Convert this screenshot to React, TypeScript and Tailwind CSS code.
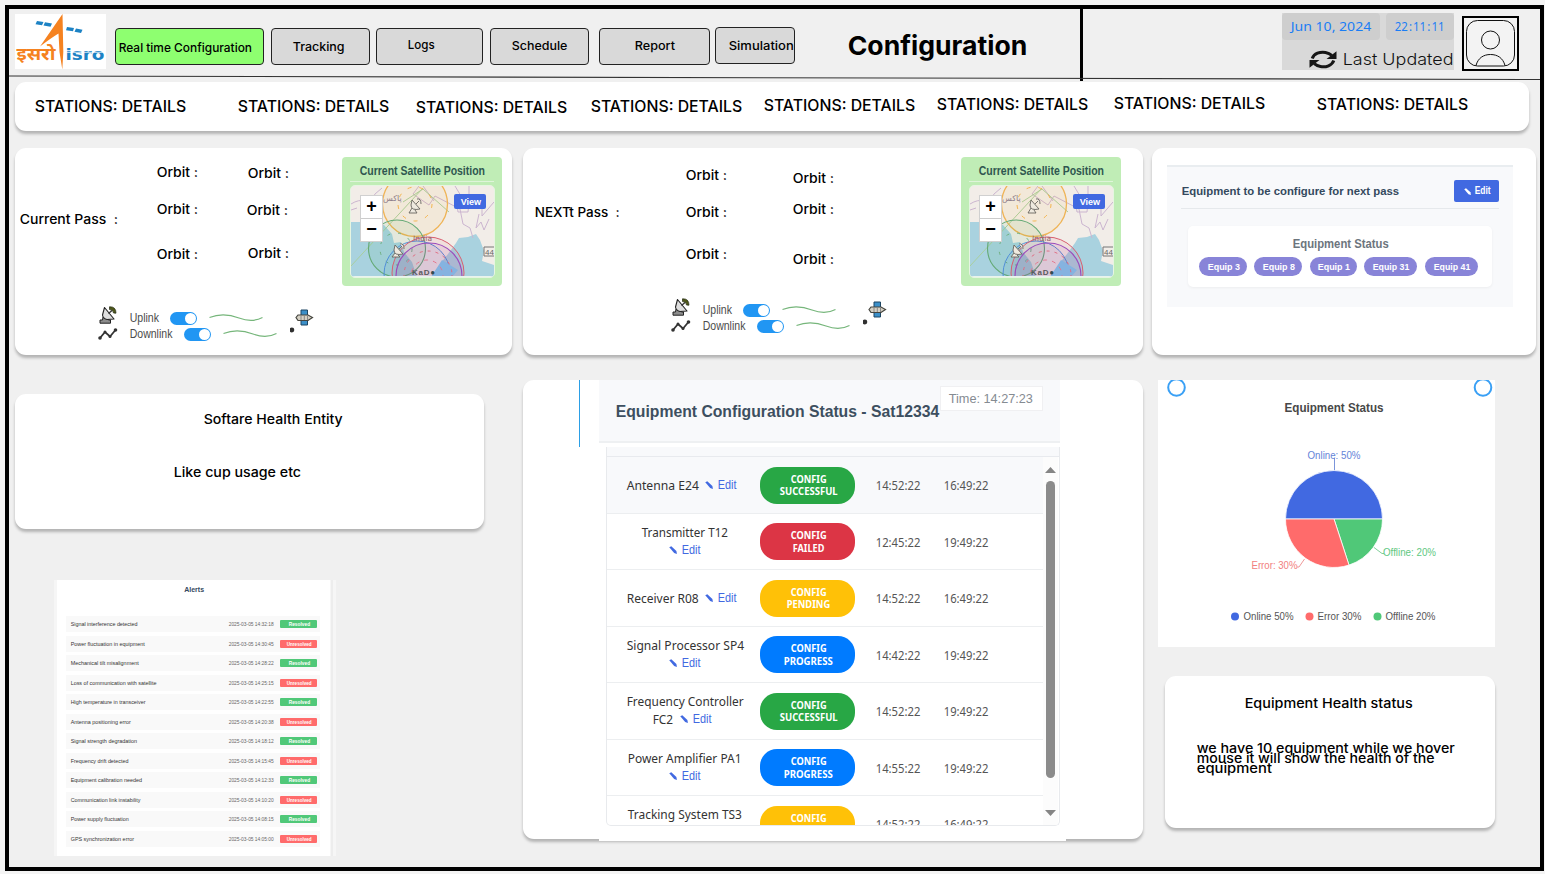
import React, { useLayoutEffect, useRef, useState } from "react";

/* A single line of text stretched to the width of its box. */
function Fit({ className, children }: { className: string; children: React.ReactNode }) {
  const outer = useRef<HTMLSpanElement>(null);
  const inner = useRef<HTMLSpanElement>(null);
  const [scale, setScale] = useState(1);
  useLayoutEffect(() => {
    if (outer.current && inner.current) {
      setScale(outer.current.clientWidth / inner.current.offsetWidth);
    }
  }, []);
  return (
    <span ref={outer} className={`block shrink-0 whitespace-pre ${className}`}>
      <span ref={inner} className="inline-block origin-left" style={{ transform: `translateX(0.7px) scaleX(${scale})` }}>
        {children}
      </span>
    </span>
  );
}

const card = "rounded-[11px] bg-white shadow-[0_3px_3px_rgba(0,0,0,0.25)]";
const arial = "font-['Liberation_Sans',sans-serif]";
const noto = "font-['Noto_Sans',sans-serif]";

function Logo() {
  return (
    <svg className="mt-[5px] ml-[6px] h-[55px] w-[91px] shrink-0 bg-white" viewBox="0 0 91 55">
      <path d="M47.500 0 L25 32.500 Q36 24 43.500 19.500 L44.500 38 L47.300 55.500 L48.300 38 Z" fill="#f58220" />
      <g fill="#1c82c4">
        <path d="M22 7l6.500 1 -1.500 3.200 -6.500 -1z M30 8.300l7 1.200 -1.500 3.200 -7 -1.200z M52 13l7 1 -1 3.200 -7 -1z M61 14.500l6.500 1.200 -1.500 3.200 -6.500 -1.200z" />
      </g>
      <text x="1.500" y="46" fontSize="17" fontWeight="700" fill="#f58220" textLength="39" lengthAdjust="spacingAndGlyphs" fontFamily="Noto Sans Devanagari, Noto Sans, Lohit Devanagari, sans-serif">इसरो</text>
      <text x="50.500" y="45.500" fontSize="15" fontWeight="700" fill="#1c82c4" textLength="39" lengthAdjust="spacingAndGlyphs" fontFamily="DejaVu Sans, sans-serif">isro</text>
      <path d="M50 38.300h40" stroke="#fff" strokeWidth=".8" />
    </svg>
  );
}

function NavButton({ box, text, children }: { box: string; text: string; children: string }) {
  return (
    <button className={`flex shrink-0 items-start rounded-[4px] border border-[#222] text-[12px] leading-[18px] font-medium ${box}`}>
      <Fit className={text}>{children}</Fit>
    </button>
  );
}

function Header() {
  return (
    <header className="relative flex h-[73px] items-start">
      <Logo />
      <NavButton box="ml-[9px] mt-[19px] h-[37px] w-[149px] bg-[#8eff70]" text="ml-[2px] mt-[9.500px] w-[133px]">Real time Configuration</NavButton>
      <NavButton box="ml-[7px] mt-[19px] h-[37px] w-[99px] bg-[#d9d9d9]" text="ml-[19px] mt-[8.500px] w-[52px]">Tracking</NavButton>
      <NavButton box="ml-[6px] mt-[19px] h-[37px] w-[107px] bg-[#d9d9d9]" text="ml-[29.500px] mt-[6.500px] w-[27px]">Logs</NavButton>
      <NavButton box="ml-[7px] mt-[19px] h-[37px] w-[99px] bg-[#d9d9d9]" text="ml-[19px] mt-[7.500px] w-[56px]">Schedule</NavButton>
      <NavButton box="ml-[10px] mt-[19px] h-[37px] w-[111px] bg-[#d9d9d9]" text="ml-[33px] mt-[7.500px] w-[40px]">Report</NavButton>
      <NavButton box="ml-[5px] mt-[18px] h-[37px] w-[80px] bg-[#d9d9d9]" text="ml-[10px] mt-[8.500px] w-[65px]">Simulation</NavButton>
      <h1 className="mt-[19px] ml-[52px]">
        <Fit className="w-[180px] text-[26px] leading-[36px] font-bold">Configuration</Fit>
      </h1>
      <div className="ml-[53px] h-[72px] w-[3px] shrink-0 bg-black" />
      <div className="mt-[4px] ml-[199px] h-[57px] w-[172px] shrink-0 bg-[#d9d9d9]">
        <div className={`flex justify-between text-[13px] leading-[27px] text-[#1a7df5] ${noto}`}>
          <div className="w-[98px] rounded-[4px] bg-[#cecece] pl-[8px]">
            <Fit className="w-[80px]">Jun 10, 2024</Fit>
          </div>
          <div className="w-[68px] rounded-[4px] bg-[#cecece] pl-[8px]">
            <Fit className="w-[50px]">{"22\u200a:\u200a11\u200a:\u200a11"}</Fit>
          </div>
        </div>
        <div className="mt-[7px] flex h-[24px] items-center pl-[27px]">
          <svg className="h-[19px] w-[28px]" viewBox="0 0 28 19" fill="none" stroke="#161616" strokeWidth="3">
            <path d="M3.200 8.500C5 3.600 11 1.400 16.500 2.400C19.300 2.900 21.200 3.900 22.800 5.300" />
            <path d="M24.800 10.500C23 15.400 17 17.600 11.500 16.600C8.700 16.100 6.800 15.100 5.200 13.700" />
            <path d="M27.500 1.200V9H17.500z M.5 17.800V10H10.500z" fill="#161616" stroke="none" />
          </svg>
          <Fit className="ml-[5px] w-[111px] text-[16.500px] leading-[24px] font-light text-[#111]">Last Updated</Fit>
        </div>
      </div>
      <svg className="mt-[7px] ml-[8px] h-[55px] w-[57px] shrink-0 bg-[#f3f3f3]" viewBox="0 0 57 55" fill="none" stroke="#111">
        <rect x="1" y="1" width="55" height="53" strokeWidth="2" stroke="#000" />
        <rect x="4.500" y="4.500" width="48" height="45.500" rx="11" />
        <circle cx="28.500" cy="24" r="9" />
        <path d="M14 49.500C16 42 21.500 38.500 28.500 38.500S41 42 43 49.500" />
      </svg>
      <svg className="absolute top-[66px] left-0 h-[6px] w-[1531px]" viewBox="0 0 1531 6">
        <path d="M0 1L1531 4.500" stroke="#333" strokeWidth="1.100" />
      </svg>
    </header>
  );
}

const stations = [
  "ml-[19px] mt-[14px]",
  "ml-[51px] mt-[14px]",
  "ml-[26px] mt-[15px]",
  "ml-[23px] mt-[14px]",
  "ml-[21px] mt-[13px]",
  "ml-[21px] mt-[12px]",
  "ml-[25px] mt-[11px]",
  "ml-[51px] mt-[12px]",
];

function SatelliteMap() {
  return (
    <div className={`h-[129px] w-[160px] shrink-0 rounded-[4px] bg-[#c0edb6] px-[8px] ${arial}`}>
      <div className="flex h-[25px] border-b border-[#dff5da] pl-[9px]">
        <Fit className="mt-[5px] w-[125px] text-[12px] leading-[18px] font-bold text-[#2f5750]">Current Satellite Position</Fit>
      </div>
      <div className="relative mt-[3px] h-[93px] w-[145px] overflow-hidden rounded-[5px] border border-[#e6f5e2] bg-[#f2ede8]">
        <svg className="h-[91px] w-[143px]" viewBox="0 0 143 91" fill="none">
          <path d="M0 36H9L33 39L41 48L43 57L50 56L53 66L61 76L66 91H0z" fill="#a9d2df" />
          <path d="M80 91L89 78L97 68L105 57L108 52L117 51L125 48L129 54L133 65L131 75L143 79V91z" fill="#a9d2df" />
          <path d="M0 18Q8 13 14 15T24 8L31 2M0 24L6 22M68 0L62 8L78 19L84 10L109 23L112 38L119 42L122 52M105 15L118 16L117 26H107L105 12M118 0V10L131 15V30L143 16M104 0L110 10M128 28L125 42L130 36L133 44L138 33M72 0L83 15" stroke="#cbb5cf" />
          <path d="M0 80L72 2M52 16L72 3L98 26" stroke="#a9cf9e" />
          <circle cx="64" cy="18" r="32.500" fill="#ffa50010" stroke="#efb457" strokeWidth="1.300" />
          <circle cx="64" cy="18" r="17" stroke="#f3b44e" strokeDasharray="4 8" />
          <circle cx="46" cy="62.500" r="28.500" fill="#28a74512" stroke="#65aa76" strokeWidth="1.100" />
          <circle cx="45" cy="63" r="16" stroke="#6fb080" strokeDasharray="3 8" />
          <circle cx="66" cy="88" r="33" fill="#2080e010" stroke="#528fd8" />
          <circle cx="77" cy="87" r="36" fill="#e0304012" stroke="#d85f70" />
          <circle cx="78" cy="90" r="33" fill="#a030b018" stroke="#9b4bbc" strokeWidth="1.200" />
          <path d="M91 74L80 91H101L107 84Z" fill="#85b3e0" />
          <circle cx="77" cy="89" r="24" stroke="#df6e83" strokeDasharray="3 5" />
          <circle cx="76" cy="90" r="16" stroke="#e37990" strokeDasharray="4 5" />
          <g stroke="#68645f" strokeWidth=".9" fill="#eee9df">
            <path d="M61 14L69 23Q60 25 60 19ZM61 22L58 27H66L64 24" />
            <path d="M66 13Q70 12 70 18M65 18L68 15" />
            <path d="M44 59L52 68Q43 70 43 64ZM44 67L41 71H49L47 69M49 58Q53 57 53 63M48 63L51 60" />
          </g>
          <text x="32" y="15" fontSize="8" fill="#8d7d8b" fontFamily="DejaVu Sans">پاکس</text>
          <text x="62" y="55" fontSize="7.500" fill="#90606d" textLength="19" fontFamily="DejaVu Sans">India</text>
          <text x="61" y="89" fontSize="8" fontWeight="700" fill="#59595d" textLength="23" fontFamily="Liberation Sans">KaD<tspan fill="#344c51">●</tspan></text>
          <path d="M143 61H133V70H143" stroke="#777" />
          <text x="134" y="69" fontSize="8" fill="#666" fontFamily="Liberation Sans">44</text>
          <path d="M0 90.500H143" stroke="#e9f3ee" />
        </svg>
        <div className="absolute top-[9px] left-[9px] w-[23px] border border-[#d0d0d0] bg-white text-center text-[18px] font-bold text-black">
          <div className="h-[23px] border-b border-[#ccc] leading-[21px]">+</div>
          <div className="h-[22px] leading-[21px]">−</div>
        </div>
        <div className="absolute top-[8px] left-[103px] flex h-[15px] w-[32px] justify-center rounded-[2px] bg-[#4169e1] text-white">
          <Fit className="w-[20px] text-[9px] leading-[16px] font-bold">View</Fit>
        </div>
      </div>
    </div>
  );
}

function Dish() {
  return (
    <svg className="h-[18px] w-[18px]" viewBox="0 0 18 18">
      <path d="M4 11L3.500 14H1V17.200H11.500V14H9.500L9 11" fill="#8d8d8d" stroke="#222" />
      <path d="M5.500 1.500L3.500 9Q4 12.500 8 13.500L15 13Z" fill="#dedede" stroke="#222" strokeWidth="1.100" strokeLinejoin="round" />
      <path d="M9.500 7.500L13 4.500" stroke="#333" strokeWidth="1.200" />
      <path d="M10.500 .8Q17 .5 17 7.200L14.500 7Q14.500 3.500 10.500 3.500Z" fill="#4e581a" stroke="#202510" strokeWidth=".7" />
    </svg>
  );
}

function Toggle() {
  return (
    <span className="flex h-[13px] w-[27px] shrink-0 items-center justify-end rounded-full bg-[#2196f3] pr-[1px]">
      <span className="h-[11px] w-[11px] rounded-full bg-white" />
    </span>
  );
}

function Wave() {
  return (
    <svg className="h-[8px] w-[54px] shrink-0" viewBox="0 0 54 8" fill="none">
      <path d="M.5 3.500C12 -1 22 1 30 4S45 8 53.500 3.500" stroke="#76b67b" strokeWidth="1.100" />
    </svg>
  );
}

function Links() {
  return (
    <div className={`flex w-[220px] text-[12px] leading-[16px] text-[#4c4c4c] ${arial}`}>
      <div className="w-[31px] shrink-0">
        <div className="pl-[1px]"><Dish /></div>
        <svg className="mt-[4px] h-[12px] w-[20px]" viewBox="0 0 20 12" fill="none" stroke="#333" strokeWidth="1.800">
          <path d="M2 10L7 4L12 8.500L17.500 2" />
          <g fill="#333" stroke="none"><circle cx="2" cy="10" r="1.800" /><circle cx="7" cy="4" r="1.500" /><circle cx="12" cy="8.500" r="1.500" /><circle cx="17.500" cy="2" r="1.800" /></g>
        </svg>
      </div>
      <div className="w-[137px] shrink-0 pt-[4px]">
        <div className="flex h-[16px] items-center">
          <Fit className="w-[29px]">Uplink</Fit>
          <span className="w-[12px] shrink-0" />
          <Toggle />
          <span className="w-[12px] shrink-0" />
          <Wave />
        </div>
        <div className="flex h-[16px] items-center">
          <Fit className="w-[43px]">Downlink</Fit>
          <span className="w-[12px] shrink-0" />
          <Toggle />
          <span className="w-[12px] shrink-0" />
          <Wave />
        </div>
      </div>
      <svg className="mt-[2px] ml-[24px] h-[28px] w-[26px] shrink-0" viewBox="0 0 26 28">
        <path d="M11 2H17.500V17H11Z" fill="#3b8fc8" stroke="#1d4562" />
        <path d="M6 9.500L8 7H18L22.500 9.500L18 12.500H8Z" fill="#d5d0c3" stroke="#44443e" strokeWidth="1.200" />
        <path d="M11 7.500V12M14.300 7.500V12M17.500 7.500V12" stroke="#888" />
        <circle cx="1.900" cy="22" r="2.400" fill="#303030" />
      </svg>
    </div>
  );
}

function PencilIcon({ className }: { className: string }) {
  return (
    <svg className={`inline-block shrink-0 ${className}`} viewBox="0 0 9 9" fill="currentColor">
      <path d="M.3 1.500L2.600 .2L8.300 5.500L8.900 8.900L5.800 8Z" />
    </svg>
  );
}

function Orbits({ box, tops }: { box: string; tops: string[] }) {
  return (
    <div className={`w-[42px] shrink-0 text-[13px] leading-[18px] font-medium ${box}`}>
      {tops.map((t, i) => (
        <Fit key={i} className={`w-[41px] ${t}`}>Orbit :</Fit>
      ))}
    </div>
  );
}

function CurrentPass() {
  return (
    <section className={`h-[207px] w-[497px] shrink-0 ${card}`}>
      <div className="flex h-[155px] items-start">
        <Fit className="mt-[62px] ml-[4px] w-[98px] text-[13px] leading-[18px] font-medium">Current Pass  :</Fit>
        <Orbits box="ml-[39px]" tops={["mt-[15px]", "mt-[19px]", "mt-[27px]"]} />
        <Orbits box="ml-[48.500px]" tops={["mt-[16px]", "mt-[19px] -ml-[1px]", "mt-[25px]"]} />
        <div className="mt-[9px] ml-[53.500px]"><SatelliteMap /></div>
      </div>
      <div className="ml-[83px] pt-[3px]"><Links /></div>
    </section>
  );
}

function NextPass() {
  return (
    <section className={`h-[207px] w-[620px] shrink-0 ${card}`}>
      <div className="flex h-[147px] items-start">
        <Fit className="mt-[55px] ml-[11px] w-[85px] text-[13px] leading-[18px] font-medium">NEXTt Pass  :</Fit>
        <Orbits box="ml-[66px]" tops={["mt-[18px]", "mt-[19px]", "mt-[24px]"]} />
        <Orbits box="ml-[65px]" tops={["mt-[21px]", "mt-[13px]", "mt-[32px]"]} />
        <div className="mt-[9px] ml-[127px]"><SatelliteMap /></div>
      </div>
      <div className="ml-[148px] pt-[3px]"><Links /></div>
    </section>
  );
}

const equips = [
  { label: "Equip 3", box: "w-[48px]", text: "w-[32px]" },
  { label: "Equip 8", box: "w-[48px]", text: "w-[32px]" },
  { label: "Equip 1", box: "w-[47px]", text: "w-[32px]" },
  { label: "Equip 31", box: "w-[53px]", text: "w-[37px]" },
  { label: "Equip 41", box: "w-[53px]", text: "w-[37px]" },
];

function NextEquipment() {
  return (
    <section className={`h-[207px] w-[384px] shrink-0 pt-[17px] pl-[15px] ${card} ${arial}`}>
      <div className="h-[142px] w-[346px] border-t-2 border-[#e9edf0] bg-[#f8f9fb] px-[14px]">
        <div className="flex h-[42px] items-start justify-between border-b border-[#e6e9ec]">
          <Fit className="mt-[15px] w-[217px] text-[11.500px] leading-[18px] font-bold text-[#34495e]">Equipment to be configure for next pass</Fit>
          <button className="mt-[13px] flex h-[22px] w-[45px] items-center justify-center rounded-[2px] bg-[#4169e1] pl-[1px] text-white">
            <PencilIcon className="mr-[3px] h-[7px] w-[7px]" />
            <Fit className="w-[16px] text-[10px] leading-[22px] font-bold">Edit</Fit>
          </button>
        </div>
        <div className="mt-[17px] ml-[7px] flex h-[61px] w-[304px] flex-col items-center rounded-[5px] bg-white pt-[9px] shadow-[0_1px_3px_rgba(0,0,0,0.05)]">
          <Fit className="w-[96px] text-[12px] leading-[18px] font-bold text-[#6c757d]">Equipment Status</Fit>
          <div className="mt-[4px] mr-[4px] flex gap-[7.500px]">
            {equips.map((e) => (
              <span key={e.label} className={`flex h-[19px] justify-center rounded-full bg-[#8884d8] text-[9.500px] leading-[19px] font-bold text-white ${e.box}`}>
                <Fit className={e.text}>{e.label}</Fit>
              </span>
            ))}
          </div>
        </div>
      </div>
    </section>
  );
}

type Alert = { text: string; width: string; time: string; ok: boolean };
const alerts: Alert[] = [
  { text: "Signal interference detected", width: "w-[67px]", time: "14:32:18", ok: true },
  { text: "Power fluctuation in equipment", width: "w-[74px]", time: "14:30:45", ok: false },
  { text: "Mechanical tilt misalignment", width: "w-[68px]", time: "14:28:22", ok: true },
  { text: "Loss of communication with satellite", width: "w-[86px]", time: "14:25:15", ok: false },
  { text: "High temperature in transceiver", width: "w-[75px]", time: "14:22:55", ok: true },
  { text: "Antenna positioning error", width: "w-[60px]", time: "14:20:38", ok: false },
  { text: "Signal strength degradation", width: "w-[66px]", time: "14:18:12", ok: true },
  { text: "Frequency drift detected", width: "w-[58px]", time: "14:15:45", ok: false },
  { text: "Equipment calibration needed", width: "w-[71px]", time: "14:12:33", ok: true },
  { text: "Communication link instability", width: "w-[70px]", time: "14:10:20", ok: false },
  { text: "Power supply fluctuation", width: "w-[58px]", time: "14:08:15", ok: true },
  { text: "GPS synchronization error", width: "w-[63px]", time: "14:05:00", ok: false },
];

function Alerts() {
  return (
    <section className={`mt-[51px] ml-[39px] flex h-[276px] w-[282px] bg-[#f6f6f6] pl-[3px] ${arial}`}>
      <div className="h-[276px] w-[273px] shrink-0 bg-white">
        <div className="flex h-[34px] justify-center pt-[4px]">
          <Fit className="w-[20px] text-[7px] leading-[12px] font-bold text-[#34495e]">Alerts</Fit>
        </div>
        {alerts.map((a) => (
          <div key={a.text} className="flex h-[19.560px] flex-col pl-[9px]">
            <div className="mt-[2px] flex h-[16px] w-[254px] items-center bg-[#f9f9f9] pl-[4px]">
              <div className="w-[158px] shrink-0">
                <Fit className={`text-[6px] leading-[14px] text-[#333] ${a.width}`}>{a.text}</Fit>
              </div>
              <Fit className="w-[45px] text-[5.500px] leading-[14px] text-[#666]">{`2025-03-05 ${a.time}`}</Fit>
              <span className={`ml-[7px] flex h-[8px] w-[37px] shrink-0 justify-center rounded-[1px] text-[5.500px] leading-[8px] font-bold text-white ${a.ok ? "bg-[#50c878]" : "bg-[#ff6b6b]"}`}>
                <Fit className={a.ok ? "w-[21px]" : "w-[25px]"}>{a.ok ? "Resolved" : "Unresolved"}</Fit>
              </span>
            </div>
          </div>
        ))}
      </div>
      <div className="ml-[1px] w-[2px] bg-[#ededed]" />
    </section>
  );
}

const Edit = () => (
  <span className={`flex items-center text-[#4169e1] ${arial}`}>
    <PencilIcon className="mr-[4px] h-[8px] w-[8px]" />
    <Fit className="w-[19px] text-[12px] leading-[18px]">Edit</Fit>
  </span>
);

const green = "bg-[#28a745]";
const red = "bg-[#dc3545]";
const yellow = "bg-[#ffc107]";
const blue = "bg-[#007bff]";

const rows = [
  { name: "Antenna E24", w: "w-[72px]", inline: true, status: "SUCCESSFUL", sw: "w-[58px]", color: green, a: "14:52:22", b: "16:49:22", box: "h-[57px] bg-[#f8f9fb]" },
  { name: "Transmitter T12", w: "w-[86px]", status: "FAILED", sw: "w-[32px]", color: red, a: "12:45:22", b: "19:49:22", box: "h-[56px]" },
  { name: "Receiver R08", w: "w-[72px]", inline: true, status: "PENDING", sw: "w-[44px]", color: yellow, a: "14:52:22", b: "16:49:22", box: "h-[57px]" },
  { name: "Signal Processor SP4", w: "w-[117px]", status: "PROGRESS", sw: "w-[49px]", color: blue, a: "14:42:22", b: "19:49:22", box: "h-[56px]" },
  { name: "Frequency Controller", w: "w-[117px]", second: "FC2", status: "SUCCESSFUL", sw: "w-[58px]", color: green, a: "14:52:22", b: "19:49:22", box: "h-[57px]" },
  { name: "Power Amplifier PA1", w: "w-[114px]", status: "PROGRESS", sw: "w-[49px]", color: blue, a: "14:55:22", b: "19:49:22", box: "h-[56px]" },
  { name: "Tracking System TS3", w: "w-[114px]", status: "PENDING", sw: "w-[44px]", color: yellow, a: "14:52:22", b: "16:49:22", box: "h-[57px]" },
];

function ConfigTable() {
  return (
    <section className={`flex h-[459px] w-[620px] shrink-0 ${card}`}>
      <div className="ml-[56px] h-[67px] w-px bg-[#2b9fe6]" />
      <div className="ml-[19px] h-[461px] w-[467px] shrink-0 bg-white">
        <div className={`flex h-[63px] w-[461px] items-start border-b-2 border-[#eef0f2] bg-[#f8f9fb] ${arial}`}>
          <Fit className="mt-[19.500px] ml-[16px] w-[324px] text-[17px] leading-[24px] font-bold text-[#3d4f60]">Equipment Configuration Status - Sat12334</Fit>
          <div className="mt-[6px] ml-[1px] flex h-[25px] w-[103px] justify-center border border-[#f0f0f2] bg-white">
            <Fit className="mr-[3px] w-[84px] text-[13px] leading-[23px] text-[#858b92]">Time: 14:27:23</Fit>
          </div>
        </div>
        <div className={`mt-[4px] ml-[7px] flex h-[379px] w-[454px] overflow-hidden rounded-b-[5px] border border-t-0 border-[#e8eaed] ${noto}`}>
          <div className="w-[436px] shrink-0">
            <div className="h-[10px] w-[452px] border-b border-[#e8eaee] bg-[#f8f9fb]" />
            {rows.map((r) => (
              <div key={r.name} className={`flex items-center border-b border-[#eceef0] text-[14px] text-[#333] ${r.box}`}>
                <div className="flex w-[153px] shrink-0 flex-col items-center pl-[1px]">
                  {r.inline ? (
                    <div className="mr-[7px] flex items-center gap-[7px]">
                      <Fit className={`text-[13px] leading-[18px] ${r.w}`}>{r.name}</Fit>
                      <Edit />
                    </div>
                  ) : (
                    <>
                      <Fit className={`-mt-[2px] text-[13px] leading-[18px] ${r.w}`}>{r.name}</Fit>
                      <div className={`flex items-center gap-[8px] ${r.second ? "mr-[5px]" : ""}`}>
                        {r.second && <Fit className="w-[20px] text-[13px] leading-[18px]">{r.second}</Fit>}
                        <Edit />
                      </div>
                    </>
                  )}
                </div>
                <div className={`flex h-[37px] w-[95px] shrink-0 flex-col items-center rounded-[17px] pt-[6px] text-[10px] leading-[12.500px] font-bold text-white ${r.color}`}>
                  <Fit className="w-[36px]">CONFIG</Fit>
                  <Fit className={r.sw}>{r.status}</Fit>
                </div>
                <Fit className="ml-[19.500px] w-[45px] text-[13px] leading-[18px] text-[#555]">{r.a}</Fit>
                <Fit className="ml-[23px] w-[45px] text-[13px] leading-[18px] text-[#555]">{r.b}</Fit>
              </div>
            ))}
          </div>
          <div className="mt-[10px] flex w-[15px] flex-col items-center bg-[#fcfcfc] pt-[10px]">
            <svg className="h-[6px] w-[11px]" viewBox="0 0 11 6"><path d="M0 6L5.500 0L11 6z" fill="#858585" /></svg>
            <div className="mt-[8px] h-[297px] w-[9px] rounded-full bg-[#8b8b8b]" />
            <svg className="mt-[32px] h-[6px] w-[11px]" viewBox="0 0 11 6"><path d="M0 0H11L5.500 6z" fill="#858585" /></svg>
          </div>
        </div>
      </div>
    </section>
  );
}

function PieCard() {
  return (
    <section className={`flex h-[267px] w-[337px] flex-col items-center bg-white ${arial}`}>
      <svg className="h-[267px] w-[337px]" viewBox="0 0 337 267" fontFamily="Liberation Sans">
        <g fill="#fff" stroke="#3aa0f5" strokeWidth="2"><circle cx="18.500" cy="7.500" r="8.300" /><circle cx="325" cy="7.500" r="8.300" /></g>
        <text x="126.500" y="32" fontSize="12" fontWeight="700" fill="#484848" textLength="99" lengthAdjust="spacingAndGlyphs">Equipment Status</text>
        <path d="M176.500 78V91" stroke="#7b95da" />
        <path d="M216 167.500L224 173.500H226" stroke="#80cf9a" fill="none" />
        <path d="M146.500 179L141 187H139" stroke="#ef9999" fill="none" />
        <g stroke="#fff" strokeWidth=".8">
          <path d="M176 139H127.500A48.500 48.500 0 0 1 224.500 139Z" fill="#4169e1" />
          <path d="M176 139H224.500A48.500 48.500 0 0 1 191 185.100Z" fill="#50c878" />
          <path d="M176 139L191 185.100A48.500 48.500 0 0 1 127.500 139Z" fill="#ff6b6b" />
        </g>
        <g fontSize="10.500">
          <text x="149.500" y="78.500" fill="#6484d8" textLength="53" lengthAdjust="spacingAndGlyphs">Online: 50%</text>
          <text x="225" y="175.500" fill="#5fc882" textLength="53" lengthAdjust="spacingAndGlyphs">Offline: 20%</text>
          <text x="93.500" y="188.500" fill="#f28080" textLength="46" lengthAdjust="spacingAndGlyphs">Error: 30%</text>
          <g fill="#555">
            <text x="85.500" y="240" textLength="50" lengthAdjust="spacingAndGlyphs">Online 50%</text>
            <text x="159.500" y="240" textLength="44" lengthAdjust="spacingAndGlyphs">Error 30%</text>
            <text x="227.500" y="240" textLength="50" lengthAdjust="spacingAndGlyphs">Offline 20%</text>
          </g>
        </g>
        <circle cx="77" cy="236.500" r="4" fill="#4169e1" />
        <circle cx="151.500" cy="236.500" r="4" fill="#ff6b6b" />
        <circle cx="219.500" cy="236.500" r="4" fill="#50c878" />
      </svg>
    </section>
  );
}

export default function App() {
  return (
    <div className="h-[874px] w-[1545px] overflow-hidden bg-[#f4f4f4] pt-[5px] pl-[5px] font-['Inter',sans-serif] text-black">
      <main className="h-[866px] w-[1539px] border-4 border-black bg-[#f0f0f0]">
        <Header />
        <div className={`ml-[6px] flex h-[49px] w-[1514px] items-start text-[15.500px] leading-[22px] font-medium ${card}`}>
          {stations.map((s, i) => (
            <Fit key={i} className={`w-[152px] ${s}`}>STATIONS: DETAILS</Fit>
          ))}
        </div>
        <div className="mt-[17px] ml-[6px] flex">
          <CurrentPass />
          <div className="ml-[11px]"><NextPass /></div>
          <div className="ml-[9px]"><NextEquipment /></div>
        </div>
        <div className="mt-[25px] ml-[6px] flex h-[485px] items-start">
          <div className="w-[508px] shrink-0 pt-[14px]">
            <section className={`h-[135px] w-[469px] text-[13px] leading-[18px] font-medium ${card}`}>
              <div className="pt-[16px] pl-[188px]"><Fit className="w-[139px]">Softare Health Entity</Fit></div>
              <div className="pt-[35px] pl-[158px]"><Fit className="w-[127px]">Like cup usage etc</Fit></div>
            </section>
            <Alerts />
          </div>
          <ConfigTable />
          <div className="ml-[15px] w-[337px] shrink-0">
            <PieCard />
            <section className={`mt-[29px] ml-[7px] h-[152px] w-[330px] text-[13px] leading-[18px] font-medium ${card}`}>
              <div className="pt-[18px] pl-[79px]"><Fit className="w-[168px]">Equipment Health status</Fit></div>
              <div className="pt-[30.500px] pl-[30.500px] leading-[10.400px]">
                <Fit className="w-[258px]">we have 10 equipment while we hover</Fit>
                <Fit className="w-[238px]">mouse it will show the health of the</Fit>
                <Fit className="w-[75px]">equipment</Fit>
              </div>
            </section>
          </div>
        </div>
      </main>
    </div>
  );
}
